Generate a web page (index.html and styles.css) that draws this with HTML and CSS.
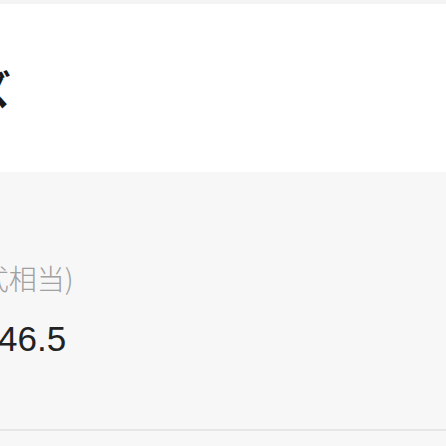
FILE: index.html
```html
<!DOCTYPE html>
<html lang="ja">
<head>
<meta charset="utf-8">
<link rel="stylesheet" href="styles.css">
</head>
<body>
<div class="topstrip"></div>
<header class="header">
  <h1 class="title">サイズ</h1>
</header>
<section class="panel">
  <div class="label">(日本式相当)</div>
  <div class="value">46.5</div>
</section>
<div class="rest"></div>
</body>
</html>
```
FILE: styles.css
```css
html, body {
  margin: 0;
  padding: 0;
  width: 446px;
  height: 446px;
  overflow: hidden;
  background: #f7f7f7;
}
.topstrip {
  height: 4px;
  background: #f4f4f4;
}
.header {
  height: 168px;
  background: #ffffff;
  display: flex;
  align-items: center;
}
.title {
  margin: 0 0 0 -108px;
  font-family: "Noto Sans CJK JP", sans-serif;
  font-weight: 700;
  font-size: 40px;
  line-height: 1;
  color: #1a1a1a;
  white-space: nowrap;
}
.panel {
  height: 259px;
  box-sizing: border-box;
  padding-top: 90px;
  border-bottom: 2px solid #e6e6e6;
  display: flex;
  flex-direction: column;
}
.label {
  margin-left: -84px;
  font-family: "Noto Sans CJK JP", sans-serif;
  font-weight: 300;
  font-size: 28px;
  line-height: 32px;
  color: #a0a0a0;
  white-space: nowrap;
}
.value {
  margin-top: 27px;
  margin-left: -2px;
  font-family: "Liberation Sans", Arial, sans-serif;
  font-size: 35px;
  line-height: 36px;
  color: #222222;
  white-space: nowrap;
}
.rest {
  height: 20px;
}
```
